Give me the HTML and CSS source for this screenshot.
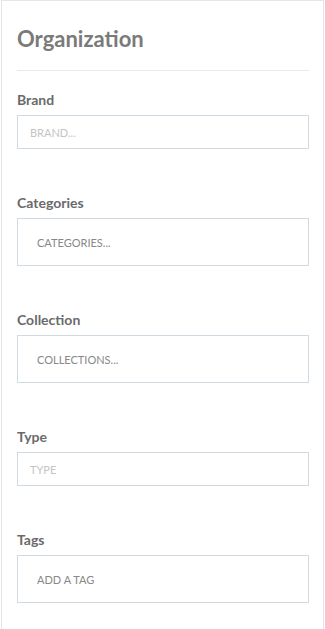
FILE: index.html
```html
<!DOCTYPE html>
<html lang="en">
<head>
    <meta charset="UTF-8">
    <meta name="viewport" content="width=device-width, initial-scale=1.0">
    <title>Organization</title>
    <link rel="stylesheet" href="styles.css">
</head>
<body>

<div class="card">
    <h2 class="card-title">Organization</h2>

    <div class="card-body">
        <div class="field">
            <label for="brand">Brand</label>
            <input type="text" id="brand" class="input" placeholder="Brand...">
        </div>

        <div class="field">
            <label for="categories">Categories</label>
            <input type="text" id="categories" class="input input-tags" placeholder="Categories...">
        </div>

        <div class="field">
            <label for="collection">Collection</label>
            <input type="text" id="collection" class="input input-tags" placeholder="Collections...">
        </div>

        <div class="field">
            <label for="type">Type</label>
            <input type="text" id="type" class="input" placeholder="Type">
        </div>

        <div class="field">
            <label for="tags">Tags</label>
            <input type="text" id="tags" class="input input-tags" placeholder="Add a tag">
        </div>
    </div>
</div>

</body>
</html>
```

FILE: styles.css
```css
* {
    margin: 0;
    padding: 0;
    box-sizing: border-box;
}

body {
    font-family: Lato, 'Open Sans', sans-serif;
    background: #fff;
}

.card {
    margin: 0 1px;
    min-height: 629px;
    padding: 0 14px 0 15px;
    border: 1px solid #e6e6e6;
    border-bottom: none;
    background: #fff;
}

.card-title {
    font-size: 22px;
    line-height: 27px;
    font-weight: 700;
    color: #7a7a7a;
    padding: 24px 0 18px;
    border-bottom: 1px solid #e9e9e9;
}

.card-body {
    padding-top: 20px;
}

.field {
    margin-bottom: 45px;
}

label {
    display: block;
    font-size: 14px;
    line-height: 17px;
    font-weight: 700;
    color: #6a6a6a;
    margin-bottom: 7px;
}

.input {
    display: block;
    width: 100%;
    height: 34px;
    padding: 0 12px;
    border: 1px solid #cfdae2;
    border-radius: 0;
    font-family: Lato, 'Open Sans', sans-serif;
    font-size: 11px;
    text-transform: uppercase;
    color: #555;
    background: #fff;
}

.input::placeholder {
    color: #c4c4c4;
}

.input:focus {
    outline: none;
    border-color: #a9bccb;
}

.input-tags {
    height: 48px;
    padding: 0 19px;
}

.input-tags::placeholder {
    color: #888;
}
```
